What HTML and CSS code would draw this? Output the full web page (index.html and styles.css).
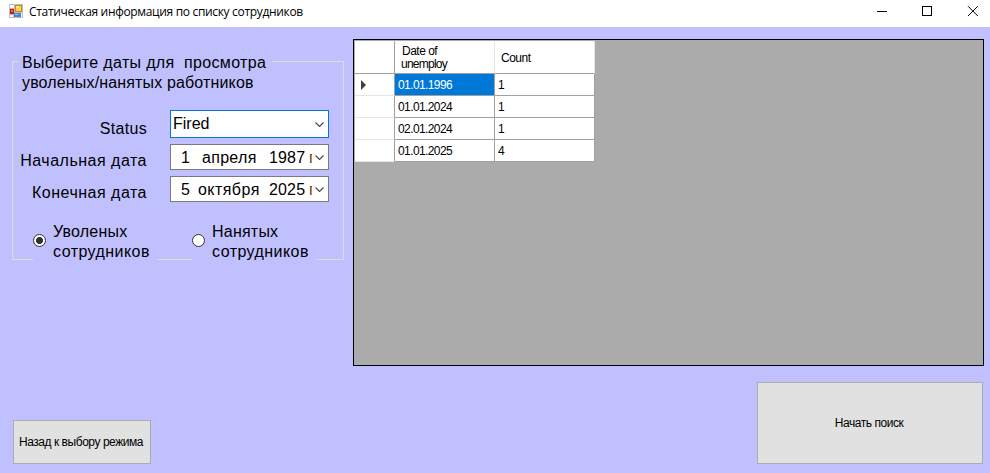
FILE: index.html
```html
<!DOCTYPE html>
<html lang="ru">
<head>
<meta charset="utf-8">
<title>Статическая информация по списку сотрудников</title>
<link rel="stylesheet" href="styles.css">
</head>
<body>
<header class="titlebar">
  <svg class="app-icon" width="14" height="14" viewBox="0 0 14 14" shape-rendering="crispEdges">
    <rect width="14" height="14" fill="#bdbdbd"/>
    <path d="M1 1h4v3H1zM1 11h3v2H1zM12 9h1v4h-1z" fill="#fff"/>
    <rect x="6" y="1" width="7" height="7" fill="#c88a10"/>
    <rect x="7" y="2" width="5" height="5" fill="#ffd24a"/>
    <rect x="7" y="2" width="3" height="2" fill="#ffe99a"/>
    <rect x="1" y="5" width="4" height="5" fill="#b3201c"/>
    <rect x="2" y="6" width="2" height="2" fill="#ee6a58"/>
    <rect x="5" y="9" width="7" height="4" fill="#4a83d8"/>
    <rect x="6" y="10" width="3" height="1" fill="#9cc3f5"/>
  </svg>
  <h1 class="title">Статическая информация по списку сотрудников</h1>
  <svg class="controls" width="104" height="12" viewBox="0 0 104 12" fill="none" stroke="#000" shape-rendering="crispEdges">
    <path d="M1 5.5h10"/>
    <rect x="46.500" y=".5" width="9" height="9"/>
    <path shape-rendering="auto" d="M92 .2l9.800 9.800M101.800 .2L92 10"/>
  </svg>
</header>
<main class="client">
  <section class="side">
    <div class="group">
      <div class="legend"><span class="l1">Выберите даты для&nbsp; просмотра</span><br><span class="l2">уволеных/нанятых работников</span></div>
      <div class="fields">
        <span class="label s">Status</span>
        <div class="box combo"><span class="value">Fired</span><svg class="chev" width="9" height="5" viewBox="0 0 9 5"><path d="M.5 .5l4 4 4-4"/></svg></div>
        <span class="label n">Начальная дата</span>
        <div class="box"><span class="date"><span class="d">1</span><span class="m m1">апреля</span><span class="y">1987</span><span class="g">г.</span></span><svg class="chev" width="9" height="5" viewBox="0 0 9 5"><path d="M.5 .5l4 4 4-4"/></svg></div>
        <span class="label k">Конечная дата</span>
        <div class="box"><span class="date"><span class="d">5</span><span class="m m2">октября</span><span class="y">2025</span><span class="g">г.</span></span><svg class="chev" width="9" height="5" viewBox="0 0 9 5"><path d="M.5 .5l4 4 4-4"/></svg></div>
      </div>
      <div class="radios">
        <div class="radio"><span class="dot on"></span><span><span class="r1">Уволеных</span><br>сотрудников</span></div>
        <div class="radio"><span class="dot"></span><span><span class="r1">Нанятых</span><br>сотрудников</span></div>
      </div>
    </div>
    <button class="btn back">Назад к выбору режима</button>
  </section>
  <section class="content">
    <div class="viewer">
      <div class="table">
        <div class="th"></div><div class="th first"><span><span class="w1">Date of</span><br>unemploy</span></div><div class="th">Count</div>
        <div class="rh"><svg width="5" height="10" viewBox="0 0 5 10"><path d="M0 0l5 5-5 5z" fill="#404040"/></svg></div><div class="td sel">01.01.1996</div><div class="td">1</div>
        <div class="rh"></div><div class="td">01.01.2024</div><div class="td">1</div>
        <div class="rh"></div><div class="td">02.01.2024</div><div class="td">1</div>
        <div class="rh last"></div><div class="td">01.01.2025</div><div class="td">4</div>
      </div>
    </div>
    <button class="btn search">Начать поиск</button>
  </section>
</main>
</body>
</html>
```
FILE: styles.css
```css
* { box-sizing: border-box; }
body { margin: 0; width: 990px; height: 473px; overflow: hidden; background: #c0c0ff; color: #000; font-family: "Liberation Sans", Arial, sans-serif; font-size: 16px; }
.titlebar { height: 27px; background: #fff; display: flex; align-items: flex-start; padding-left: 9px; }
.app-icon { margin-top: 4px; }
.title { margin: 4px 0 0 6px; font: 12px/16px "Open Sans", "Noto Sans", sans-serif; white-space: nowrap; letter-spacing: -0.33px; }
.controls { margin: 6px 10px 0 auto; }
.client { height: 446px; display: flex; }
.side { width: 353px; padding: 34px 9px 9px 12px; display: flex; flex-direction: column; justify-content: space-between; align-items: flex-start; }
.group { width: 332px; height: 199px; border: 1px solid #dcdcdc; }
.legend { width: 253px; height: 41px; margin: -10px 0 0 6px; padding: 1px 0 0 3px; background: #c0c0ff; line-height: 20px; white-space: nowrap; }
.l1 { letter-spacing: .33px; }
.l2 { letter-spacing: .15px; }
.fields { display: grid; grid-template-columns: 134px 159px; grid-template-rows: 28px 26px 26px; column-gap: 23px; row-gap: 6px; margin-top: 17px; }
.label { text-align: right; line-height: 20px; white-space: nowrap; padding-top: 7px; letter-spacing: .5px; }
.s { padding-top: 9px; letter-spacing: .3px; }
.box { display: flex; align-items: center; justify-content: space-between; background: #fff; border: 1px solid #7a7a7a; padding: 0 4px 0 2px; overflow: hidden; }
.combo { border-color: #0078d7; }
.value { line-height: 20px; }
.date { display: grid; grid-template-columns: 19px 70px 40px 3px; width: 139px; padding: 2px 0 0 7px; line-height: 20px; white-space: nowrap; }
.d { padding-left: 1px; }
.m { letter-spacing: .45px; margin-left: -1px; }
.m1 { padding-left: 4px; letter-spacing: .3px; }
.y { letter-spacing: .15px; }
.g { overflow: hidden; color: #7a3c00; }
.chev { fill: none; stroke: #444; stroke-width: 1.1; flex: none; }
.radios { display: flex; margin: 17px 0 0 20px; gap: 35px; }
.radio { display: flex; align-items: center; width: 124px; height: 43px; gap: 7px; line-height: 20px; letter-spacing: .45px; background: #c0c0ff; }
.radio > span:last-child { padding-top: 2px; }
.r1 { letter-spacing: .22px; }
.dot { width: 13px; height: 13px; border: 1px solid #333; border-radius: 50%; background: #fff; flex: none; }
.on { background: radial-gradient(circle, #333 3.2px, #fff 3.8px); }
.btn { border: 1px solid #adadad; background: #e1e1e1; color: #000; font: 12px "Liberation Sans", Arial, sans-serif; padding: 0; white-space: nowrap; letter-spacing: -.45px; }
.back { width: 138px; height: 44px; margin-left: 1px; padding-right: 2px; }
.content { width: 631px; padding: 12px 0 9px; display: flex; flex-direction: column; justify-content: space-between; align-items: flex-end; }
.viewer { width: 631px; height: 327px; border: 1px solid #000; background: #ababab; padding: 1px; }
.search { width: 226px; height: 82px; margin-right: 1px; padding-right: 2px; }
.table { display: grid; grid-template-columns: 40px 100px 100px; grid-template-rows: 33px repeat(4, 22px); width: 240px; font-size: 12px; background: #fff; }
.th, .td, .rh { border-right: 1px solid #a0a0a0; border-bottom: 1px solid #a0a0a0; display: flex; align-items: center; white-space: nowrap; }
.th { padding: 2px 0 0 6px; line-height: 13px; border-right-color: #e5e5e5; letter-spacing: -.5px; }
.first { letter-spacing: -.65px; }
.first .w1 { letter-spacing: -.5px; }
.w1 { padding-left: 1px; }
.first { letter-spacing: -.75px; }
.th:first-child { border-right-color: #a0a0a0; }
.rh { border-bottom-color: #e5e5e5; padding-left: 6px; }
.td { padding-left: 3px; letter-spacing: -0.6px; }
.sel { background: #0078d7; color: #fff; }
```
